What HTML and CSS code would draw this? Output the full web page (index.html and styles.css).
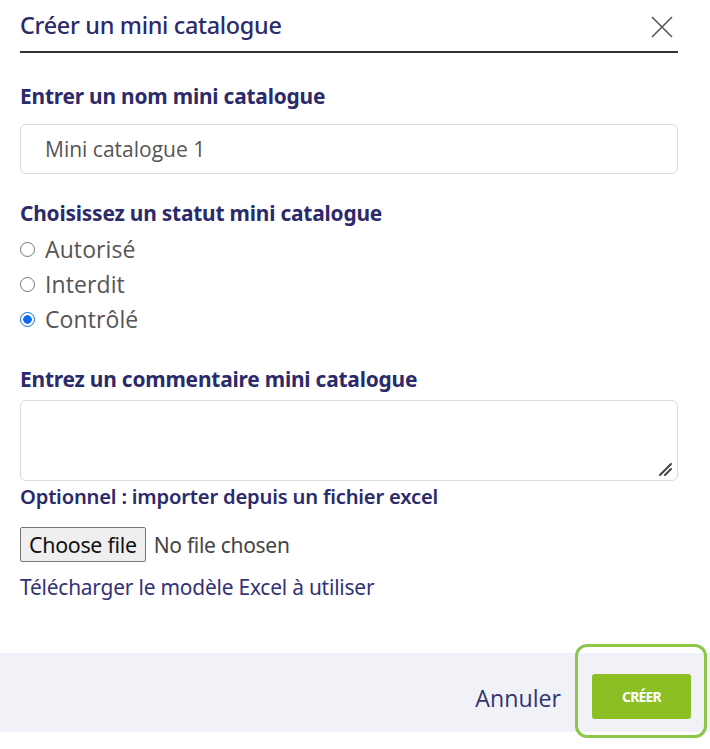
FILE: index.html
```html
<!DOCTYPE html>
<html lang="fr">
<head>
<meta charset="utf-8">
<link rel="stylesheet" href="styles.css">
</head>
<body>
<div class="modal">
  <header class="modal-header">
    <h1 class="modal-title">Créer un mini catalogue</h1>
    <button class="close" aria-label="Fermer">
      <svg width="22" height="22" viewBox="0 0 22 22"><path d="M1 1 L21 21 M21 1 L1 21" stroke="#555" stroke-width="1.6" fill="none"/></svg>
    </button>
  </header>
  <div class="modal-body">
    <label class="field-label l1">Entrer un nom mini catalogue</label>
    <div class="text-input">Mini catalogue 1</div>

    <div class="field-label l2">Choisissez un statut mini catalogue</div>
    <div class="radios">
      <label class="radio"><span class="dot"></span>Autorisé</label>
      <label class="radio"><span class="dot"></span>Interdit</label>
      <label class="radio"><span class="dot checked"></span>Contrôlé</label>
    </div>

    <label class="field-label l3">Entrez un commentaire mini catalogue</label>
    <div class="comment-wrap">
      <textarea class="comment"></textarea>
      <svg class="grip" width="14" height="14" viewBox="0 0 14 14"><path d="M2 13 L13 2 M7 13 L13 7" stroke="#444" stroke-width="2" stroke-linecap="round" fill="none"/></svg>
    </div>

    <div class="field-label l4">Optionnel : importer depuis un fichier excel</div>
    <div class="file-row">
      <span class="file-btn">Choose file</span>
      <span class="file-name">No file chosen</span>
    </div>
    <a class="template-link">Télécharger le modèle Excel à utiliser</a>
  </div>
  <footer class="modal-footer">
    <span class="cancel">Annuler</span>
    <span class="create">CRÉER</span>
    <span class="highlight"></span>
  </footer>
</div>
</body>
</html>
```
FILE: styles.css
```css
* { box-sizing: border-box; }
html, body { margin: 0; padding: 0; background: #fff; }
body { font-family: "Open Sans", "Noto Sans", sans-serif; width: 710px; height: 749px; overflow: hidden; }

.modal { position: relative; }

.modal-header {
  display: flex;
  align-items: center;
  justify-content: space-between;
  margin: 0 32px 0 20px;
  height: 53px;
  border-bottom: 2px solid #333;
}
.modal-title {
  margin: 0;
  font-family: "Noto Sans", sans-serif;
  font-weight: 500;
  font-size: 23.4px;
  line-height: 30px;
  color: #2b2a6a;
  letter-spacing: -0.3px;
  padding-bottom: 1px;
}
.close {
  border: 0;
  background: none;
  padding: 0;
  margin-right: 5px;
  margin-top: 2px;
  display: flex;
}

.modal-body {
  padding: 0 32px 0 20px;
  display: flex;
  flex-direction: column;
  align-items: flex-start;
}

.field-label {
  display: block;
  font-family: "Noto Sans", sans-serif;
  font-weight: 700;
  font-size: 20.9px;
  color: #2b2a6a;
  line-height: 22px;
  letter-spacing: -0.2px;
}
.l1 { margin-top: 32px; }
.l2 { margin-top: 28px; }
.l3 { margin-top: 32px; }
.l4 { margin-top: 4px; font-weight: 600; font-size: 20.2px; }

.text-input {
  align-self: stretch;
  margin-top: 17px;
  height: 50px;
  border: 1px solid #d9d9de;
  border-radius: 6px;
  padding-left: 24px;
  display: flex;
  align-items: center;
  font-size: 21px;
  color: #555;
}

.radios { display: flex; flex-direction: column; margin-top: 7px; }
.radio {
  display: flex;
  align-items: center;
  height: 35px;
  font-size: 23px;
  color: #555;
  letter-spacing: 0.1px;
}
.dot {
  width: 15px; height: 15px;
  border: 1.5px solid #777;
  border-radius: 50%;
  margin-right: 10px;
  margin-top: 1px;
  flex: none;
}
.dot.checked {
  border: 1.5px solid #0b6dde;
  background: radial-gradient(circle, #0a6cf0 0 4px, #fff 4.5px 100%);
}

.comment-wrap {
  position: relative;
  align-self: stretch;
  margin-top: 10px;
  height: 81px;
}
.comment {
  display: block;
  width: 100%;
  height: 100%;
  margin: 0;
  border: 1px solid #d9d9de;
  border-radius: 6px;
  resize: none;
  font-family: inherit;
}
.grip {
  position: absolute;
  right: 6px;
  bottom: 5px;
}

.file-row { display: flex; align-items: center; margin-top: 20px; }
.file-btn {
  height: 35px;
  padding: 0 8px;
  display: flex; align-items: center;
  border: 1px solid #767676;
  border-radius: 2px;
  background: #efefef;
  font-family: "Noto Sans", sans-serif;
  font-size: 21.4px;
  color: #111;
  letter-spacing: -0.3px;
}
.file-name {
  margin-left: 8px;
  font-family: "Noto Sans", sans-serif;
  font-size: 21px;
  color: #444;
  letter-spacing: -0.3px;
}
.template-link {
  margin-top: 12px;
  line-height: 26px;
  font-family: "Noto Sans", sans-serif;
  font-size: 20.9px;
  color: #323276;
  letter-spacing: -0.2px;
}

.modal-footer {
  position: relative;
  margin-top: 53px;
  height: 79px;
  background: #f0f2f8;
  display: flex;
  align-items: flex-start;
  justify-content: flex-end;
  padding: 21px 19px 0 0;
}
.cancel {
  font-size: 23.2px;
  line-height: 30px;
  color: #34336e;
  margin-right: 31px;
  margin-top: 9px;
}
.create {
  width: 99px;
  height: 45px;
  background: #8cbf23;
  border-radius: 3px;
  color: #fff;
  font-family: "Noto Sans", sans-serif;
  font-weight: 700;
  font-size: 14px;
  letter-spacing: -0.8px;
  display: flex; align-items: center; justify-content: center;
}
.highlight {
  position: absolute;
  left: 575px;
  top: -9px;
  width: 132px;
  height: 94px;
  border: 3px solid #8cc64a;
  border-radius: 12px;
}
```
